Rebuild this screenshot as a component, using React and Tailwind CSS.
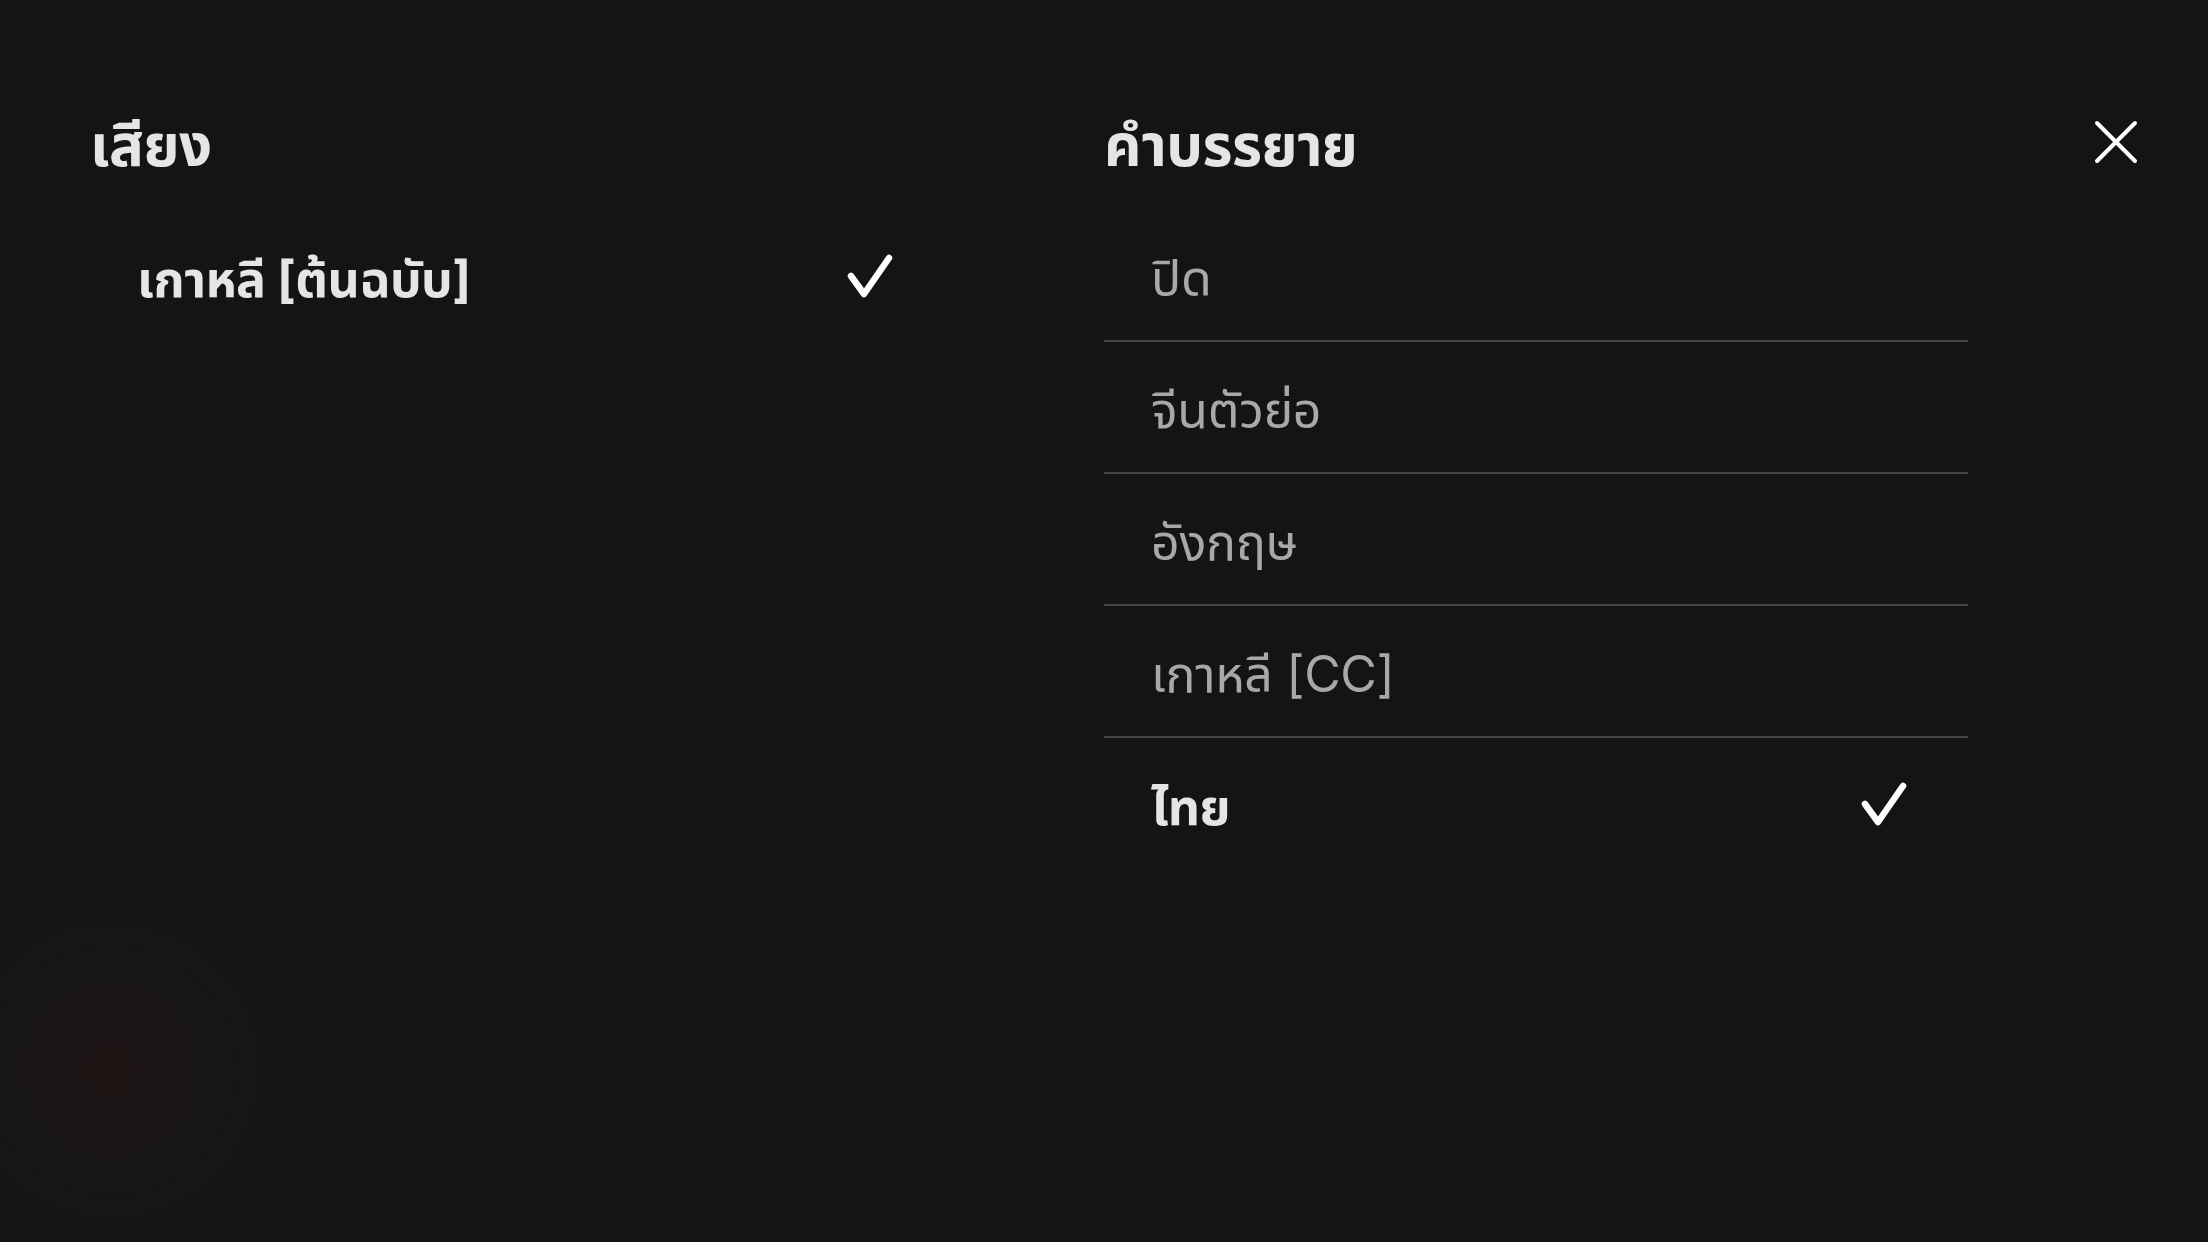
import React from 'react';

const audio = [{ label: 'เกาหลี [ต้นฉบับ]', selected: true }];

const subtitles = [
  { label: 'ปิด' },
  { label: 'จีนตัวย่อ' },
  { label: 'อังกฤษ' },
  { label: 'เกาหลี [CC]' },
  { label: 'ไทย', selected: true },
];

const Check = () => (
  <svg width="50" height="46" viewBox="0 0 50 46" fill="none" className="shrink-0 -mr-[3px]">
    <path d="M6 23 L19 41 L44 5" stroke="#fff" strokeWidth="6.5" strokeLinecap="round" strokeLinejoin="round" />
  </svg>
);

const CloseIcon = () => (
  <svg width="44" height="44" viewBox="0 0 44 44" fill="none">
    <path d="M3 3 L41 41 M41 3 L3 41" stroke="#fff" strokeWidth="4" strokeLinecap="round" />
  </svg>
);

const OptionList = ({ items }) => (
  <ul>
    {items.map((item, i) => (
      <li
        key={item.label}
        className={
          'h-[132px] flex items-center justify-between pl-[47px] pr-[62px] ' +
          (i < items.length - 1 ? 'border-b-2 border-[#444444]' : '')
        }
      >
        <span
          className={
            item.selected
              ? 'pt-[5px] text-[50px] font-bold text-[#e5e5e5] leading-none tracking-[-0.5px]'
              : 'pt-[5px] text-[50px] font-normal text-[#a8a8a8] leading-none tracking-[-0.3px]'
          }
        >
          {item.label}
        </span>
        {item.selected && <Check />}
      </li>
    ))}
  </ul>
);

const Column = ({ title, items }) => (
  <section className="w-[864px]">
    <h2 className="text-[58px] font-bold text-[#e5e5e5] leading-none h-[90px] mb-[20px] flex items-center tracking-[-0.5px]">
      {title}
    </h2>
    <OptionList items={items} />
  </section>
);

export default function App() {
  return (
    <div
      className="w-[2208px] h-[1242px] overflow-hidden bg-[#141414] bg-[radial-gradient(circle_at_110px_1070px,#1f1414_0px,#1a1516_60px,#161616_140px,#141414_220px)] flex pl-[90px] pr-[70px] pt-[100px]"
      style={{ fontFamily: 'Inter, "Noto Sans Thai", "Noto Sans", sans-serif' }}
    >
      <div className="flex gap-[150px]">
        <Column title="เสียง" items={audio} />
        <Column title="คำบรรยาย" items={subtitles} />
      </div>
      <button className="ml-auto mt-[20px] self-start w-[44px] h-[44px]" aria-label="close">
        <CloseIcon />
      </button>
    </div>
  );
}
